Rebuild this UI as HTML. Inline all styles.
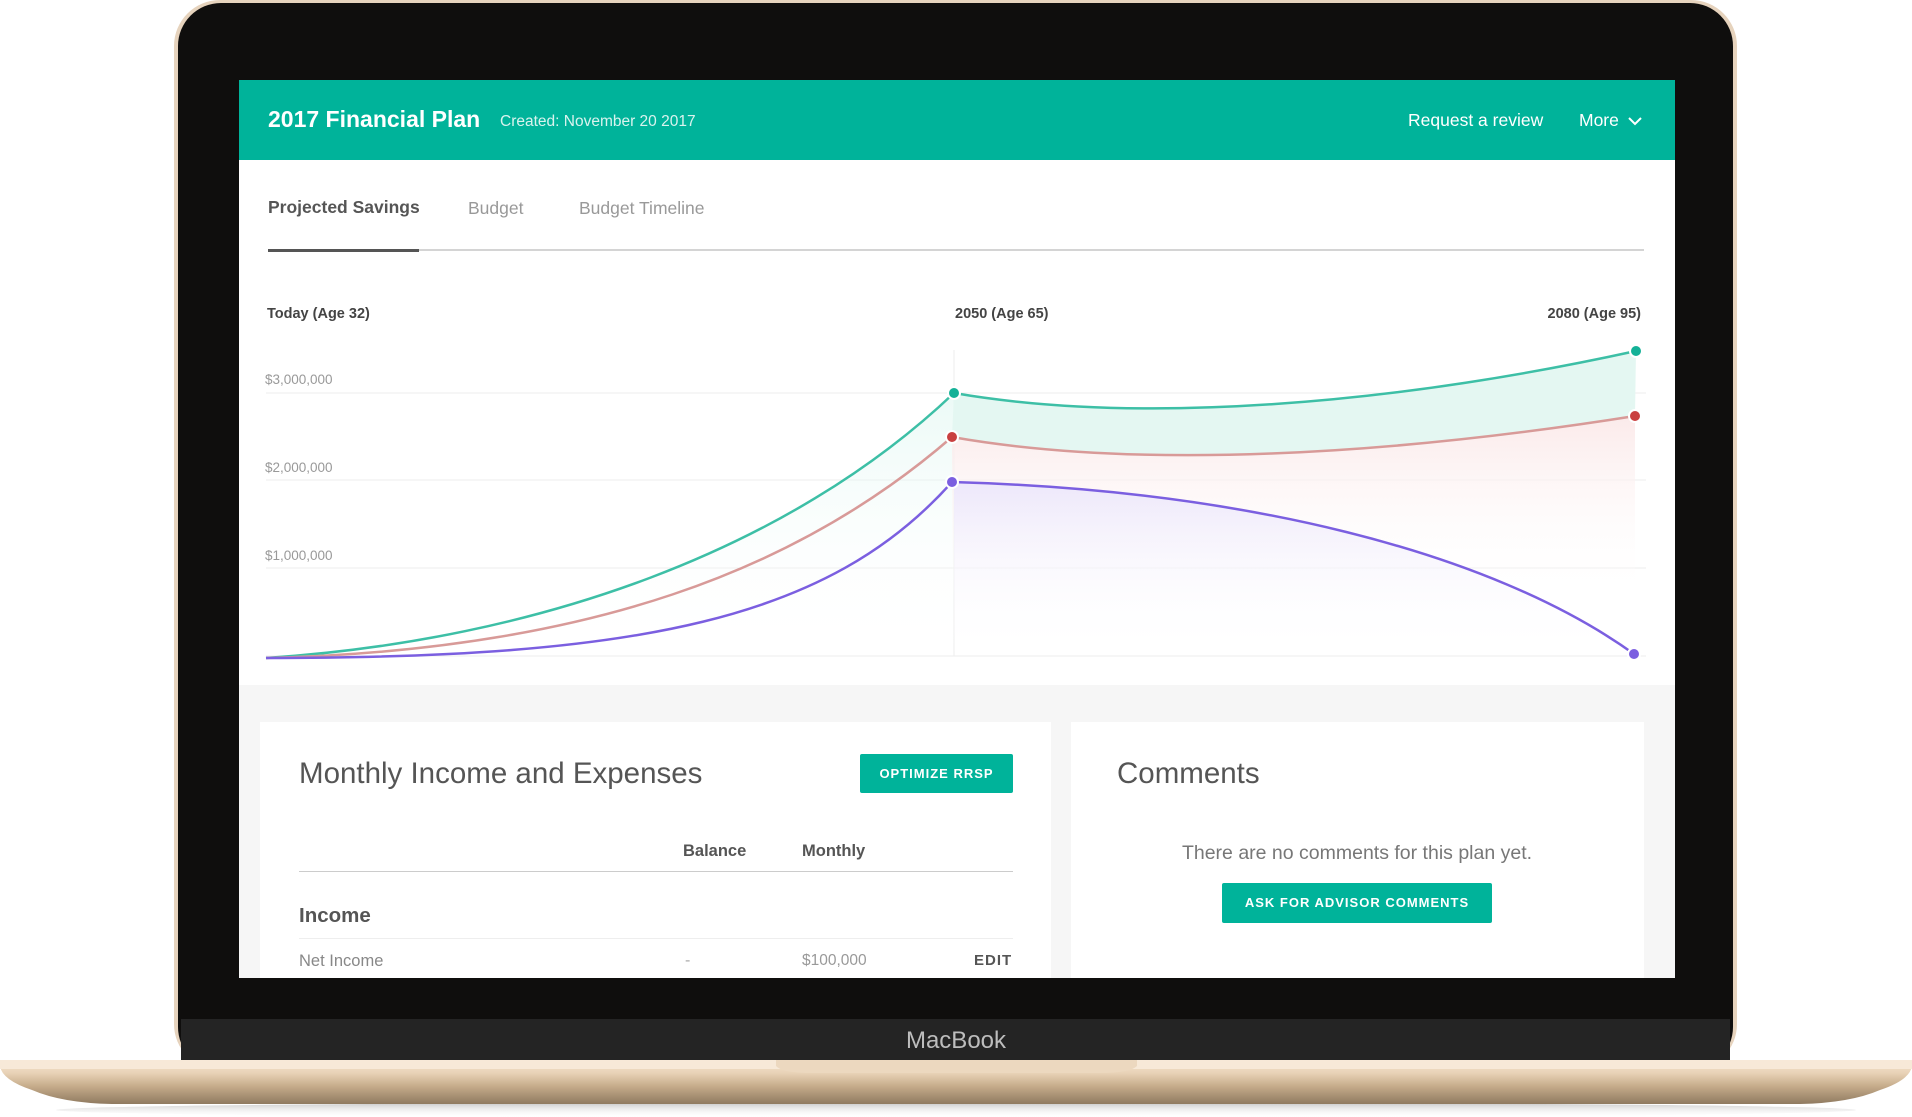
<!DOCTYPE html>
<html><head><meta charset="utf-8"><style>
*{margin:0;padding:0;box-sizing:border-box}
body{width:1912px;height:1117px;background:#fff;position:relative;overflow:hidden;font-family:"Liberation Sans",sans-serif}
.abs{position:absolute}
.t{position:absolute;white-space:nowrap}
</style></head><body>
<svg class="abs" style="left:0;top:0" width="1912" height="1117">
<defs>
<linearGradient id="base" x1="0" y1="0" x2="0" y2="1"><stop offset="0" stop-color="#f6e6d2"/><stop offset="0.3" stop-color="#e8d2b6"/><stop offset="0.6" stop-color="#c5ab8a"/><stop offset="1" stop-color="#8f7a60"/></linearGradient>
<linearGradient id="sh" x1="0" y1="0" x2="0" y2="1"><stop offset="0" stop-color="#999" stop-opacity=".6"/><stop offset="1" stop-color="#fff" stop-opacity="0"/></linearGradient>
</defs>
<rect x="174" y="0" width="1563" height="1070" rx="46" fill="#e6d3bd"/>
<rect x="178" y="3" width="1555" height="1067" rx="43" fill="#0f0e0d"/>
<rect x="181" y="1019" width="1549" height="42" fill="#242424"/>
<text x="956" y="1048" font-family="Liberation Sans" font-size="24" fill="#bdbdbd" text-anchor="middle">MacBook</text>
<ellipse cx="956" cy="1110" rx="900" ry="8" fill="url(#sh)"/>
<path d="M0 1060 H1912 V1066 Q1910 1080 1880 1090 Q1850 1103 1800 1104 H112 Q62 1103 32 1090 Q2 1080 0 1066 Z" fill="url(#base)"/>
<rect x="0" y="1060" width="1912" height="9" fill="#f7e9d8"/>
<path d="M776 1060 H1137 V1066 Q1130 1073 1100 1073 H812 Q782 1073 776 1066 Z" fill="#ecd8bf"/>
</svg>

<div class="abs" style="left:239px;top:80px;width:1436px;height:898px;background:#fff;overflow:hidden">
  <div class="abs" style="left:0;top:0;width:1436px;height:80px;background:#00b39a"></div>
  <div class="t" style="left:29px;top:26px;font-size:23px;font-weight:bold;color:#fff">2017 Financial Plan</div>
  <div class="t" style="left:261px;top:33px;font-size:15.5px;color:#d9f3ee">Created: November 20 2017</div>
  <div class="t" style="left:1169px;top:30px;font-size:17.5px;color:#fff">Request a review</div>
  <div class="t" style="left:1340px;top:30px;font-size:17.5px;color:#fff">More</div>
  <svg class="abs" style="left:1388px;top:36px" width="16" height="10"><path d="M2 2 L8 8 L14 2" stroke="#fff" stroke-width="2" fill="none"/></svg>

  <div class="t" style="left:29px;top:117px;font-size:17.5px;font-weight:bold;color:#555">Projected Savings</div>
  <div class="t" style="left:229px;top:118px;font-size:17.5px;color:#999">Budget</div>
  <div class="t" style="left:340px;top:118px;font-size:17.5px;color:#999">Budget Timeline</div>
  <div class="abs" style="left:29px;top:169px;width:1376px;height:2px;background:#d4d4d4"></div>
  <div class="abs" style="left:29px;top:169px;width:151px;height:3px;background:#555"></div>

  <div class="t" style="left:28px;top:226px;font-size:14.5px;font-weight:bold;color:#444">Today (Age 32)</div>
  <div class="t" style="left:716px;top:226px;font-size:14.5px;font-weight:bold;color:#444">2050 (Age 65)</div>
  <div class="t" style="left:1296px;top:226px;width:106px;font-size:14.5px;font-weight:bold;color:#444;text-align:right">2080 (Age 95)</div>
  <div class="t" style="left:26px;top:292px;font-size:13.5px;color:#999">$3,000,000</div>
  <div class="t" style="left:26px;top:380px;font-size:13.5px;color:#999">$2,000,000</div>
  <div class="t" style="left:26px;top:468px;font-size:13.5px;color:#999">$1,000,000</div>
  <svg class="abs" style="left:0;top:0" width="1436" height="620">
    <defs>
      <linearGradient id="g1" x1="0" y1="0" x2="0" y2="1"><stop offset="0" stop-color="#d8f5ee"/><stop offset="1" stop-color="#fff" stop-opacity="0"/></linearGradient>
      <linearGradient id="g3" x1="0" y1="0" x2="0" y2="1"><stop offset="0" stop-color="#fbeaea"/><stop offset="1" stop-color="#fff" stop-opacity="0"/></linearGradient>
      <linearGradient id="g2" x1="0" y1="0" x2="0" y2="1"><stop offset="0" stop-color="#ede8fb"/><stop offset="1" stop-color="#fff" stop-opacity="0"/></linearGradient>
    </defs>
    <g stroke="#eee" stroke-width="1"><line x1="27" y1="313" x2="1407" y2="313"/><line x1="27" y1="400" x2="1407" y2="400"/><line x1="27" y1="488" x2="1407" y2="488"/><line x1="27" y1="576" x2="1407" y2="576"/><line x1="715" y1="270" x2="715" y2="576"/></g>
    <path d="M27 578 C300 560 550 470 715 313 L715 576 Z" fill="url(#g1)" opacity=".5"/>
    <path d="M713 357 C900 390 1150 375 1396 336 L1396 520 L713 520 Z" fill="url(#g3)"/>
    <path d="M715 313 C900 345 1150 325 1397 271 L1396 336 C1150 375 900 390 713 357 Z" fill="#e4f7f2"/>
    <path d="M715 402 C1000 410 1250 470 1395 574 L715 576 Z" fill="url(#g2)"/>
    <path d="M27 578 C300 560 550 470 715 313 C900 345 1150 325 1397 271" stroke="#3dbfa6" stroke-width="2.5" fill="none"/>
    <path d="M27 578 C350 570 560 490 713 357 C900 390 1150 375 1396 336" stroke="#d89a98" stroke-width="2.5" fill="none"/>
    <path d="M27 578 C400 578 590 540 713 402 C1000 410 1250 470 1395 574" stroke="#7b5fe0" stroke-width="2.5" fill="none"/>
    <circle cx="715" cy="313" r="6" fill="#14b197" stroke="#fff" stroke-width="2"/>
    <circle cx="713" cy="357" r="6" fill="#c94040" stroke="#fff" stroke-width="2"/>
    <circle cx="713" cy="402" r="6" fill="#7b5fe0" stroke="#fff" stroke-width="2"/>
    <circle cx="1397" cy="271" r="6" fill="#14b197" stroke="#fff" stroke-width="2"/>
    <circle cx="1396" cy="336" r="6" fill="#c94040" stroke="#fff" stroke-width="2"/>
    <circle cx="1395" cy="574" r="6" fill="#7b5fe0" stroke="#fff" stroke-width="2"/>
  </svg>

  <div class="abs" style="left:0;top:605px;width:1436px;height:293px;background:#f6f6f6"></div>
  <div class="abs" style="left:21px;top:642px;width:791px;height:260px;background:#fff"></div>
  <div class="abs" style="left:832px;top:642px;width:573px;height:260px;background:#fff"></div>
  <div class="t" style="left:60px;top:677px;font-size:29.5px;color:#555">Monthly Income and Expenses</div>
  <div class="abs" style="left:621px;top:674px;width:153px;height:39px;background:#00b39a;border-radius:2px;color:#fff;font-size:13px;font-weight:bold;letter-spacing:1px;text-align:center;line-height:39px">OPTIMIZE RRSP</div>
  <div class="t" style="left:444px;top:762px;font-size:16.5px;font-weight:bold;color:#555">Balance</div>
  <div class="t" style="left:563px;top:762px;font-size:16.5px;font-weight:bold;color:#555">Monthly</div>
  <div class="abs" style="left:60px;top:791px;width:714px;height:1px;background:#ccc"></div>
  <div class="t" style="left:60px;top:824px;font-size:20.5px;font-weight:bold;color:#555">Income</div>
  <div class="abs" style="left:60px;top:858px;width:714px;height:1px;background:#eee"></div>
  <div class="t" style="left:60px;top:872px;font-size:16.5px;color:#888">Net Income</div>
  <div class="t" style="left:446px;top:872px;font-size:16px;color:#aaa">-</div>
  <div class="t" style="left:563px;top:872px;font-size:15.5px;color:#999">$100,000</div>
  <div class="t" style="left:735px;top:872px;font-size:15px;font-weight:bold;color:#555;letter-spacing:1px">EDIT</div>

  <div class="t" style="left:878px;top:677px;font-size:29.5px;color:#555">Comments</div>
  <div class="t" style="left:1118px;top:762px;width:0;font-size:19.5px;color:#777"><span style="position:absolute;transform:translateX(-50%)">There are no comments for this plan yet.</span></div>
  <div class="abs" style="left:983px;top:803px;width:270px;height:40px;background:#00b39a;border-radius:2px;color:#fff;font-size:13px;font-weight:bold;letter-spacing:1px;text-align:center;line-height:40px">ASK FOR ADVISOR COMMENTS</div>
</div>
</body></html>
